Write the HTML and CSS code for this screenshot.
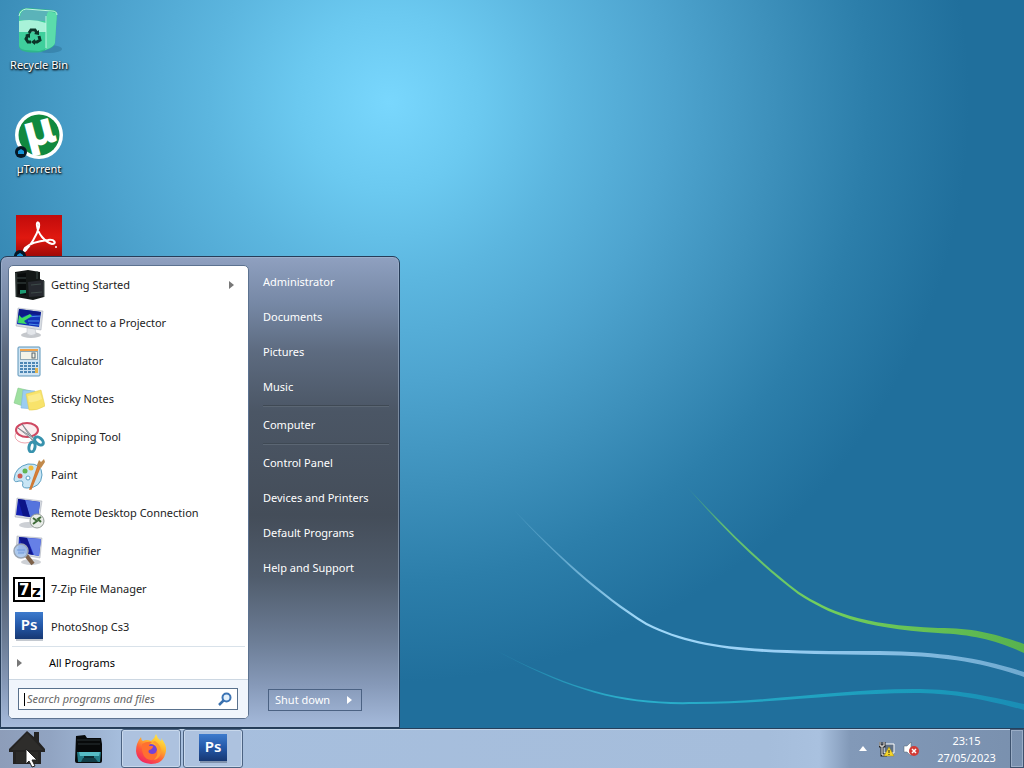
FILE: index.html
```html
<!DOCTYPE html>
<html lang="en">
<head>
    <meta charset="UTF-8">
    <meta name="viewport" content="width=device-width, initial-scale=1.0">
    <title>Desktop</title>
    <link rel="stylesheet" href="styles.css">
</head>
<body>
    <main class="desktop">
        <svg class="wallpaper" viewBox="0 0 1024 728" preserveAspectRatio="xMaxYMax slice" aria-hidden="true">
            <defs>
                <linearGradient id="green" gradientUnits="userSpaceOnUse" x1="685" y1="0" x2="1024" y2="0">
                    <stop offset="0" stop-color="#5cc06a" stop-opacity=".1"/>
                    <stop offset=".12" stop-color="#62bd72"/>
                    <stop offset=".4" stop-color="#74d05c"/>
                    <stop offset="1" stop-color="#58b24e"/>
                </linearGradient>
                <linearGradient id="white" gradientUnits="userSpaceOnUse" x1="510" y1="0" x2="1024" y2="0">
                    <stop offset="0" stop-color="#9fd8f5" stop-opacity=".1"/>
                    <stop offset=".25" stop-color="#9fd8f8"/>
                    <stop offset=".5" stop-color="#9ad0f5"/>
                    <stop offset="1" stop-color="#70aad0"/>
                </linearGradient>
                <linearGradient id="cyan" gradientUnits="userSpaceOnUse" x1="495" y1="0" x2="1024" y2="0">
                    <stop offset="0" stop-color="#2bb0cc" stop-opacity=".2"/>
                    <stop offset=".25" stop-color="#2bb0cc"/>
                    <stop offset=".8" stop-color="#1a9bbb"/>
                    <stop offset="1" stop-color="#1a8db5"/>
                </linearGradient>
            </defs>
            <path fill="url(#green)" d="M686 486C723 525 758 561 799 592C829 611 860 625 938 628C975 628 995 634 1024 644L1024 653C995 640 975 635 938 633C860 628 829 614 798 594C757 563 721 526 686 486Z"/>
            <path fill="url(#white)" d="M514 510C556 553 600 594 647 623C700 650 760 651 879 651C945 652 980 658 1024 672L1024 677C980 662 945 656 879 655C760 654 700 652 646 625C599 596 554 554 514 510Z"/>
            <path fill="url(#cyan)" d="M497 651C570 688 620 704 695 702C770 702 840 689 914 689C950 689 980 694 1024 704L1024 710C980 698 950 693 914 693C840 693 770 704 695 704C620 706 569 690 497 651Z"/>
        </svg>

        <div class="icons">
            <button class="icon">
                <svg width="48" height="48" viewBox="0 0 48 48" aria-hidden="true">
                    <ellipse cx="34" cy="42" rx="13" ry="4" fill="#174f70" opacity=".25"/>
                    <path d="M4 5Q6 1 14 1L38 3Q42 3 42 7L40 36Q39 40 34 42L26 45Q20 46 12 45L8 44Q4 43 4 39Z" fill="#2fb58b"/>
                    <path d="M31 4L42 6L40 36Q39 40 30 43Z" fill="#5bdcab"/>
                    <path d="M4 7Q5 3 10 3L28 5Q32 6 32 9L31 42L24 44L10 43Q4 42 4 38Z" fill="#3fcf9c"/>
                    <path d="M5 10Q6 3 12 2L34 4Q31 6 31 14L5 13Z" fill="#5bb3b9"/>
                    <path d="M4 14Q18 11 31 16L31 25H4Z" fill="#a8f2d8"/>
                    <path d="M4 9Q5 3 11 2L37 4Q42 4 42 8M31 9V41" fill="none" stroke="#bff7e2" stroke-width="1"/>
                    <g transform="translate(-4 -1)">
                        <path d="M18 27L20 24H24L26 27M28 30L29 34L26 36H24M20 36H17L15 33L17 29" fill="none" stroke="#0b3529" stroke-width="3"/>
                        <path d="M28 24V29L23 28ZM24 33V39L20 36ZM14 29L19 27L19 32Z" fill="#0b3529"/>
                    </g>
                </svg>
                <span>Recycle Bin</span>
            </button>
            <button class="icon">
                <svg width="50" height="48" viewBox="0 0 50 48" aria-hidden="true">
                    <circle cx="25" cy="24" r="24" fill="#fff"/>
                    <circle cx="25" cy="24" r="20.500" fill="#10893f"/>
                    <text class="mu" x="26" y="34" transform="rotate(-15 25 24)">µ</text>
                    <circle cx="7" cy="41" r="6" fill="#061725"/>
                    <path d="M4 40L7 38L10 40V43H4Z" fill="#1593d6"/>
                </svg>
                <span>µTorrent</span>
            </button>
            <button class="icon" aria-label="Adobe Reader">
                <svg width="46" height="46" viewBox="0 0 46 46" aria-hidden="true">
                    <defs>
                        <linearGradient id="red" x2="0" y2="1">
                            <stop offset="0" stop-color="#c10b0b"/>
                            <stop offset=".5" stop-color="#e01810"/>
                            <stop offset="1" stop-color="#8e0505"/>
                        </linearGradient>
                    </defs>
                    <path d="M0 0H46V46H0Z" fill="url(#red)"/>
                    <path d="M8 36C14 32 21 20 23 12C24 6 20 6 21 11C22 19 29 27 36 29C41 29 39 24 32 25C23 26 14 28 9 33C7 36 8 38 11 34" fill="none" stroke="#fff" stroke-width="2"/>
                    <circle cx="40" cy="32" r="1" fill="#fff"/>
                    <circle cx="4" cy="41" r="6" fill="#061725"/>
                    <path d="M1 40L4 38L7 40V43H1Z" fill="#1593d6"/>
                </svg>
            </button>
        </div>
    </main>

    <section class="start-menu" aria-label="Start menu">
        <div class="programs">
            <ul class="program-list">
                <li><button class="program">
                    <svg width="32" height="32" viewBox="0 0 32 32" aria-hidden="true">
                        <path d="M2 3L15 1L27 3V10L31 12V28L20 31L3 28Z" fill="#141817"/>
                        <path d="M5 5L13 4V26L5 25Z" fill="#080b0b"/>
                        <path d="M15 13L31 11V27L16 28Z" fill="#272a30"/>
                        <path d="M18 16L28 15M18 24L29 23M24 2V10M4 9H13M4 14H13" stroke="#3d4a48" fill="none"/>
                        <path d="M7 21L13 21V24L7 25Z" fill="#1c9a72"/>
                        <path d="M3 4V28M31 12V28" stroke="#45504f"/>
                    </svg>
                    <span>Getting Started</span>
                    <svg class="more" width="5" height="8" viewBox="0 0 5 8" aria-hidden="true"><path d="M0 0L5 4L0 8Z" fill="#777"/></svg>
                </button></li>
                <li><button class="program">
                    <svg width="32" height="32" viewBox="0 0 32 32" aria-hidden="true">
                        <ellipse cx="18" cy="28" rx="10" ry="3" fill="#c5c8cc"/>
                        <path d="M14 20L22 21L23 27Q18 30 14 27Z" fill="#e3e6ea" stroke="#b9bdc4" stroke-width=".5"/>
                        <path d="M5 1L30 4L28 23L3 19Z" fill="#d8dde3" stroke="#a2a9b4" stroke-width=".5"/>
                        <path d="M6 2L28 5L26 20L4 17Z" fill="#1233b8"/>
                        <path d="M6 2L28 5L27 9Q16 5 5 12Z" fill="#0d1a87"/>
                        <path d="M14 10L27 9M15 14L26 14M16 17L26 18" stroke="#4a8eea" fill="none"/>
                        <path d="M5 16L6 8L9 11L17 7L19 9L11 14L14 17Z" fill="#3fdd63"/>
                    </svg>
                    <span>Connect to a Projector</span>
                </button></li>
                <li><button class="program">
                    <svg width="32" height="32" viewBox="0 0 32 32" aria-hidden="true">
                        <rect x="5" y="2" width="22" height="29" rx="1" fill="#cfe4f3" stroke="#5b93b8"/>
                        <path d="M7 4H25V6H7Z" fill="#f0a24a"/>
                        <rect x="7.500" y="6.500" width="17" height="8" fill="#f3f3e8" stroke="#8fa7b3"/>
                        <rect x="19" y="8" width="3" height="5" fill="none" stroke="#55636b"/>
                        <g stroke="#4d86b4" stroke-width="2" stroke-dasharray="3 1">
                            <path d="M7 18H25M7 21H25M7 24H25M7 27H25"/>
                        </g>
                        <path d="M22 23H25V28H22Z" fill="#e5b44f"/>
                    </svg>
                    <span>Calculator</span>
                </button></li>
                <li><button class="program">
                    <svg width="32" height="32" viewBox="0 0 32 32" aria-hidden="true">
                        <path d="M5 5L18 8L13 24L1 20Z" fill="#9fe0a0" stroke="#7cc583" stroke-width=".5"/>
                        <path d="M10 7L22 8L20 26L8 25Z" fill="#9bcdf0" stroke="#78aede" stroke-width=".5"/>
                        <path d="M13 11L28 7L32 23Q24 28 16 27Z" fill="#f8e36b" stroke="#e3ca4b" stroke-width=".5"/>
                        <path d="M15 13L27 10L29 16Q22 20 16 19Z" fill="#fcef9b" opacity=".7"/>
                    </svg>
                    <span>Sticky Notes</span>
                </button></li>
                <li><button class="program">
                    <svg width="32" height="32" viewBox="0 0 32 32" aria-hidden="true">
                        <ellipse cx="12" cy="15" rx="10" ry="7" fill="none" stroke="#efa7b0"/>
                        <ellipse cx="14" cy="9" rx="11" ry="7" fill="#fbeef0" stroke="#cf4962" stroke-width="2"/>
                        <path d="M9 3L19 19L21 18Z" fill="#b9c0c6" stroke="#6e767d" stroke-width=".7"/>
                        <path d="M5 7L22 18L21 20Z" fill="#d2d6da" stroke="#6e767d" stroke-width=".7"/>
                        <ellipse cx="26" cy="20" rx="3" ry="5" fill="none" stroke="#3892ad" stroke-width="3" transform="rotate(-50 26 20)"/>
                        <ellipse cx="19" cy="26" rx="3" ry="5" fill="none" stroke="#3892ad" stroke-width="3" transform="rotate(10 19 26)"/>
                    </svg>
                    <span>Snipping Tool</span>
                </button></li>
                <li><button class="program">
                    <svg width="32" height="32" viewBox="0 0 32 32" aria-hidden="true">
                        <path d="M1 20Q2 8 15 5Q29 4 29 16Q28 29 14 29Q8 29 10 24Q10 21 6 22Q1 24 1 20Z" fill="#c9e6f5" stroke="#5c9fc2"/>
                        <circle cx="7" cy="17" r="2.500" fill="#cb5c52"/>
                        <circle cx="12" cy="12" r="2.500" fill="#63b553"/>
                        <circle cx="18" cy="9" r="2.500" fill="#f1bb3a"/>
                        <circle cx="15" cy="19" r="2" fill="#fff" stroke="#5c9fc2"/>
                        <path d="M25 7L27 8L18 30L17 30Z" fill="#e88a3a" stroke="#d07a35" stroke-width="1.500"/>
                        <path d="M24 6L26 1L28 3L31 0L32 3L28 9Z" fill="#c18a4c"/>
                    </svg>
                    <span>Paint</span>
                </button></li>
                <li><button class="program">
                    <svg width="32" height="32" viewBox="0 0 32 32" aria-hidden="true">
                        <ellipse cx="15" cy="28" rx="9" ry="3" fill="#cdd0d5"/>
                        <path d="M4 1L29 4L26 23L2 20Z" fill="#d6dae1" stroke="#a2a9b4" stroke-width=".5"/>
                        <path d="M5 2L27 5L25 21L3 18Z" fill="#1522b2"/>
                        <path d="M12 3L27 5L25 21L17 20Z" fill="#5574dd"/>
                        <path d="M5 2L12 3L17 20L10 19Z" fill="#0c1488"/>
                        <circle cx="24" cy="24" r="7" fill="#e8ece8" stroke="#929a95"/>
                        <path d="M20 21L24 24L20 27M28 20L25 22L28 25" fill="none" stroke="#3f6b38" stroke-width="2"/>
                    </svg>
                    <span>Remote Desktop Connection</span>
                </button></li>
                <li><button class="program">
                    <svg width="32" height="32" viewBox="0 0 32 32" aria-hidden="true">
                        <ellipse cx="18" cy="27" rx="10" ry="3" fill="#cdd0d5"/>
                        <path d="M4 1L29 3L27 23L3 19Z" fill="#d6dae1" stroke="#a2a9b4" stroke-width=".5"/>
                        <path d="M6 2L28 4L26 21L5 17Z" fill="#1f32c4"/>
                        <path d="M14 3L28 4L26 21L21 20Z" fill="#6680e6"/>
                        <path d="M6 2L14 3L20 20L11 18Z" fill="#10178c"/>
                        <path d="M13 20L20 29" stroke="#7d6149" stroke-width="4"/>
                        <circle cx="8" cy="16" r="7" fill="#a9c8ee" fill-opacity=".9" stroke="#9aa5b3" stroke-width="1.500"/>
                        <path d="M4 15H12M5 18H11" stroke="#6f98d8"/>
                    </svg>
                    <span>Magnifier</span>
                </button></li>
                <li><button class="program">
                    <svg width="32" height="32" viewBox="0 0 32 32" aria-hidden="true">
                        <rect x="1" y="5" width="30" height="23" fill="#fff" stroke="#000" stroke-width="2"/>
                        <path d="M5 9H18V24H5Z" fill="#000"/>
                        <text class="seven" x="6" y="22">7</text>
                        <text class="zed" x="19" y="24">z</text>
                    </svg>
                    <span>7-Zip File Manager</span>
                </button></li>
                <li><button class="program">
                    <svg width="32" height="32" viewBox="0 0 32 32" aria-hidden="true">
                        <defs>
                            <linearGradient id="blue" x2="0" y2="1">
                                <stop offset="0" stop-color="#3d7bcd"/>
                                <stop offset=".5" stop-color="#2458a8"/>
                                <stop offset="1" stop-color="#173873"/>
                            </linearGradient>
                        </defs>
                        <path d="M3 3H30V30H3Z" fill="#c4c9d0"/>
                        <path d="M2 1H30V28H2Z" fill="url(#blue)"/>
                        <text class="ps" x="16" y="19">Ps</text>
                    </svg>
                    <span>PhotoShop Cs3</span>
                </button></li>
            </ul>
            <button class="all-programs">
                <svg width="5" height="8" viewBox="0 0 5 8" aria-hidden="true"><path d="M0 0L5 4L0 8Z" fill="#777"/></svg>
                <span>All Programs</span>
            </button>
            <div class="search-bar">
                <label class="search">
                    <input type="text" placeholder="Search programs and files" aria-label="Search programs and files">
                    <svg width="14" height="14" viewBox="0 0 14 14" aria-hidden="true">
                        <path d="M1 13L6 8" stroke="#3a70ad" stroke-width="2.500"/>
                        <circle cx="8.500" cy="5.500" r="4" fill="#e3f0fb" stroke="#3c74b5" stroke-width="2"/>
                    </svg>
                </label>
            </div>
        </div>

        <nav class="places">
            <a href="#">Administrator</a>
            <a href="#">Documents</a>
            <a href="#">Pictures</a>
            <a href="#">Music</a>
            <hr>
            <a href="#">Computer</a>
            <hr>
            <a href="#">Control Panel</a>
            <a href="#">Devices and Printers</a>
            <a href="#">Default Programs</a>
            <a href="#">Help and Support</a>
            <button class="shutdown">
                <span>Shut down</span>
                <svg width="5" height="8" viewBox="0 0 5 8" aria-hidden="true"><path d="M0 0L5 4L0 8Z" fill="#fff"/></svg>
            </button>
        </nav>
    </section>

    <footer class="taskbar">
        <button class="task start" aria-label="Start">
            <svg width="38" height="36" viewBox="0 0 38 36" aria-hidden="true">
                <path d="M19 1L26 7V2H31V12L37 19V22H33V34H5V22H1V19Z" fill="#242322"/>
                <path d="M19 3L35 20H3Z" fill="#2e2d2b"/>
                <path d="M8 22H30V33H8Z" fill="#2b2a28"/>
            </svg>
            <svg class="cursor" width="13" height="20" viewBox="0 0 13 20" aria-hidden="true">
                <path d="M1 1V16L4 13L7 19L10 18L7 12H12Z" fill="#fff" stroke="#222"/>
            </svg>
        </button>
        <button class="task" aria-label="File Explorer">
            <svg width="30" height="30" viewBox="0 0 30 30" aria-hidden="true">
                <path d="M2 2L11 1L13 4H27L28 10V27Q28 29 26 29H3Q1 29 1 27Z" fill="#07090a"/>
                <path d="M3 6H26M4 10H26" stroke="#2b3235"/>
                <path d="M3 18H27L26 28H4Z" fill="#247c88"/>
                <path d="M5 18H26L25 22H6Z" fill="#57bcc5"/>
                <path d="M10 22H20V25H10Z" fill="#0b2a31"/>
                <path d="M7 28L9 24H21L24 28Z" fill="#123f48"/>
            </svg>
        </button>
        <button class="task open" aria-label="Firefox">
            <svg width="32" height="32" viewBox="0 0 32 32" aria-hidden="true">
                <defs>
                    <linearGradient id="fox" x1=".8" y1="0" x2=".2" y2="1">
                        <stop offset="0" stop-color="#fff04a"/>
                        <stop offset=".35" stop-color="#ffb22c"/>
                        <stop offset=".65" stop-color="#ff5a3c"/>
                        <stop offset="1" stop-color="#ee1d6a"/>
                    </linearGradient>
                </defs>
                <path d="M21 1Q22 5 26 8Q27 7 26 5Q32 12 31 18Q29 31 16 31Q2 30 1 18Q1 10 6 4Q6 7 8 8Q12 6 16 8Q20 5 21 1Z" fill="url(#fox)"/>
                <circle cx="16" cy="17" r="6" fill="#7443d6"/>
                <path d="M7 11Q12 8 17 9Q14 11 14 13H18Q18 16 14 17Q12 20 17 21Q21 21 22 17Q25 27 16 27Q6 26 7 11Z" fill="#ff7030"/>
                <path d="M20 8Q27 13 26 20Q24 26 19 27Q24 22 22 15Q21 11 17 9Z" fill="#ff9c30"/>
            </svg>
        </button>
        <button class="task open" aria-label="PhotoShop Cs3">
            <svg width="32" height="32" viewBox="0 0 32 32" aria-hidden="true">
                <path d="M3 3H30V30H3Z" fill="#8193ae"/>
                <path d="M2 1H30V28H2Z" fill="url(#blue)"/>
                <text class="ps" x="16" y="19">Ps</text>
            </svg>
        </button>

        <div class="tray">
            <button class="tray-icon" aria-label="Show hidden icons">
                <svg width="8" height="5" viewBox="0 0 8 5" aria-hidden="true"><path d="M0 5L4 0L8 5Z" fill="#fff"/></svg>
            </button>
            <button class="tray-icon" aria-label="Network">
                <svg width="16" height="16" viewBox="0 0 16 16" aria-hidden="true">
                    <path d="M5 3H15V12H5Z" fill="#5f7186" stroke="#fff"/>
                    <path d="M1 1V5H5V1M3 5V14H8" fill="none" stroke="#222" stroke-width="3"/>
                    <path d="M1 1V5H5V1M3 5V14H8" fill="none" stroke="#fff"/>
                    <path d="M10 6L15 15H5Z" fill="#f6d628" stroke="#a58b13" stroke-width=".5"/>
                    <path d="M10 9V12M10 13V14" stroke="#222"/>
                </svg>
            </button>
            <button class="tray-icon" aria-label="Volume muted">
                <svg width="16" height="16" viewBox="0 0 16 16" aria-hidden="true">
                    <path d="M1 5H4L8 1V15L4 11H1Z" fill="#fff" stroke="#53616f" stroke-width=".5"/>
                    <circle cx="11" cy="10" r="5" fill="#d23b35"/>
                    <path d="M9 8L13 12M13 8L9 12" stroke="#fff" stroke-width="1.500"/>
                </svg>
            </button>
            <button class="clock">
                <time datetime="2023-05-27T23:15">23:15<br>27/05/2023</time>
            </button>
            <button class="show-desktop" aria-label="Show desktop"></button>
        </div>
    </footer>
</body>
</html>
```

FILE: styles.css
```css
* {
    box-sizing: border-box;
}

body {
    margin: 0;
    height: 100vh;
    display: flex;
    flex-direction: column;
    position: relative;
    overflow: hidden;
    font-family: "Noto Sans", sans-serif;
    font-size: 11px;
    line-height: 16px;
    color: #222;
}

button {
    padding: 0;
    border: none;
    background: none;
    color: inherit;
    font: inherit;
    text-align: left;
}

svg {
    display: block;
    flex: none;
}

.desktop {
    flex: 1;
    min-height: 0;
    position: relative;
    background: radial-gradient(circle at 38% 14%, #79d7fd 0, #6bc9f0 90px, #5cb6df 180px, #4ea4cf 280px, #3e91bc 380px, #2c7eaa 480px, #206f9c 580px);
}

.wallpaper {
    position: absolute;
    width: 100%;
    height: 100%;
}

.icons {
    position: relative;
    width: 78px;
    padding-top: 7px;
}

.icon {
    display: flex;
    flex-direction: column;
    align-items: center;
    gap: 2px;
    width: 100%;
    height: 104px;
    color: #fff;
    text-shadow: 0 1px 2px #000, 1px 1px 2px #000;
}

.icon svg {
    overflow: visible;
}

.mu {
    fill: #fff;
    font-family: "DejaVu Sans", sans-serif;
    font-size: 44px;
    font-weight: bold;
    text-anchor: middle;
    text-shadow: none;
}

/* Start menu */

.start-menu {
    position: absolute;
    left: 0;
    bottom: 40px;
    display: flex;
    width: 400px;
    padding: 8px 10px 8px 7px;
    border: 1px solid #263c58;
    border-radius: 7px 7px 0 0;
    background: linear-gradient(#8fa0c0, #7688a5 10%, #5d6b80 20%, #4b5665 33%, #444d59 55%, #505c6c 68%, #6d7e97 82%, #8699b8 91%, #a5badb);
    box-shadow: inset 0 0 0 1px #a9bdd580;
}

.programs {
    display: flex;
    flex-direction: column;
    width: 241px;
    border: 1px solid #5c7290;
    border-radius: 5px;
    background: #fff;
    overflow: hidden;
}

.program-list {
    margin: 0;
    padding: 0;
    list-style: none;
}

.program {
    display: flex;
    align-items: center;
    gap: 6px;
    width: 100%;
    height: 38px;
    padding: 0 14px 0 4px;
}

.more {
    margin-left: auto;
}

.all-programs {
    display: flex;
    align-items: center;
    gap: 27px;
    height: 33px;
    margin: 0 3px;
    padding-left: 5px;
    border-top: 1px solid #d9e2ea;
    color: #000;
}

.search-bar {
    padding: 8px 10px 8px 9px;
    border-top: 1px solid #ccd7e2;
    background: #f0f5fc;
}

.search {
    display: flex;
    align-items: center;
    height: 22px;
    padding: 0 5px;
    border: 1px solid #59718d;
    background: #fff;
}

/* text caret */
.search::before {
    content: "";
    width: 1px;
    height: 13px;
    background: #000;
}

.search input {
    flex: 1;
    min-width: 0;
    padding: 0 2px;
    border: none;
    outline: none;
    background: none;
    font: inherit;
}

.search input::placeholder {
    color: #666;
    font-style: italic;
}

.seven,
.zed {
    font-family: "DejaVu Sans", sans-serif;
    font-size: 15px;
    font-weight: bold;
}

.seven {
    fill: #fff;
}

.ps {
    fill: #fff;
    font-size: 15px;
    font-weight: 600;
    text-anchor: middle;
}

.places {
    flex: 1;
    display: flex;
    flex-direction: column;
    padding: 0 0 8px 14px;
}

.places a {
    height: 35px;
    line-height: 33px;
    color: #fff;
    text-decoration: none;
}

.places hr {
    width: 100%;
    height: 2px;
    margin: 0 0 1px;
    border: none;
    border-top: 1px solid #3f4954;
    border-bottom: 1px solid #5b6673;
}

.shutdown {
    display: flex;
    align-items: center;
    justify-content: space-between;
    width: 94px;
    height: 22px;
    margin: auto 0 0 5px;
    padding: 0 9px 0 6px;
    border: 1px solid #4b6283;
    color: #fff;
}

/* Taskbar */

.taskbar {
    display: flex;
    gap: 2px;
    height: 40px;
    border-top: 1px solid #26405c;
    background: linear-gradient(90deg, #8d9db9, #91a4c2 50px, #a7bfde 125px, #a5bddb 75%, #a9c1df 80%, #8299b8 83%, #7990ae);
    box-shadow: inset 0 1px #c3d4e8;
}

.task {
    display: flex;
    align-items: center;
    justify-content: center;
    width: 60px;
}

.start {
    position: relative;
    width: 57px;
    padding: 0 3px 2px 0;
}

.open {
    border: 1px solid #4c6382;
    border-radius: 3px;
    background: #adc2df;
    box-shadow: inset 0 0 0 1px #c8d8ec;
}

.cursor {
    position: absolute;
    left: 25px;
    top: 19px;
}

.tray {
    display: flex;
    align-items: center;
    margin-left: auto;
    color: #fff;
}

.tray-icon {
    display: flex;
    align-items: center;
    justify-content: center;
    width: 24px;
    height: 100%;
}

.clock {
    width: 87px;
    line-height: 17px;
    text-align: center;
}

.show-desktop {
    width: 14px;
    height: 100%;
    border: 1px solid #3d526e;
    box-shadow: inset 0 0 0 1px #9aadc6;
}
```
